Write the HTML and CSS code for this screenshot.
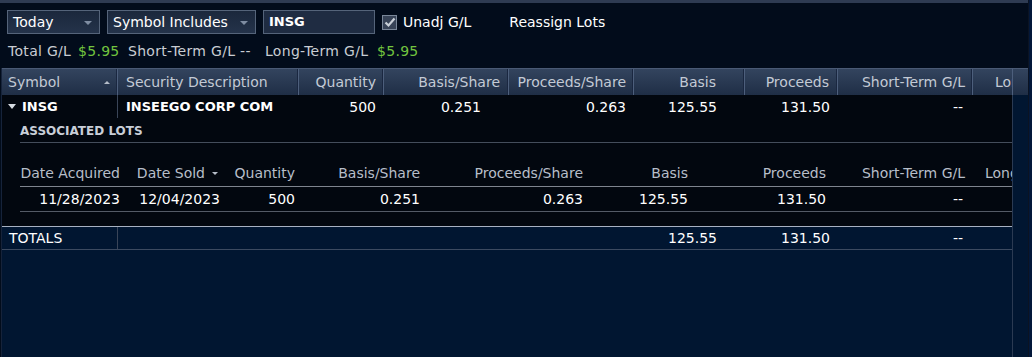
FILE: index.html
```html
<!DOCTYPE html>
<html lang="en">
<head>
    <meta charset="UTF-8">
    <title>Realized Gain/Loss</title>
    <link rel="stylesheet" href="styles.css">
</head>
<body>
    <div class="page">
        <div class="main">
            <div class="topbar"></div>

            <div class="toolbar">
                <div class="select select-today">Today<span class="caret"></span></div>
                <div class="select select-symbol">Symbol Includes<span class="caret"></span></div>
                <div class="text-input">INSG</div>
                <div class="check">
                    <span class="check-box">
                        <svg width="12" height="11" viewBox="0 0 12 11"><path d="M1.5 5.5 L4.5 8.5 L10.5 1.5" fill="none" stroke="#c9d0d8" stroke-width="2.2"/></svg>
                    </span>
                    Unadj G/L
                </div>
                <span class="link">Reassign Lots</span>
            </div>

            <div class="summary">
                <span class="sum-total">Total G/L</span>
                <span class="gain sum-gain">$5.95</span>
                <span class="sum-short">Short-Term G/L --</span>
                <span class="sum-long">Long-Term G/L</span>
                <span class="gain">$5.95</span>
            </div>

            <div class="grid-area">
                <div class="grid">
                    <div class="row head">
                        <div class="cell sym">Symbol<span class="sort-up"></span></div>
                        <div class="cell desc">Security Description</div>
                        <div class="cell num pr7">Quantity</div>
                        <div class="cell num pr8">Basis/Share</div>
                        <div class="cell num pr7">Proceeds/Share</div>
                        <div class="cell num pr28">Basis</div>
                        <div class="cell num pr8">Proceeds</div>
                        <div class="cell num pr7">Short-Term G/L</div>
                        <div class="cell last">Long-Term G/L</div>
                    </div>

                    <div class="body">
                        <div class="row group">
                            <div class="cell sym"><span class="expand"></span>INSG</div>
                            <div class="cell desc">INSEEGO CORP COM</div>
                            <div class="cell num pr8">500</div>
                            <div class="cell num pr28">0.251</div>
                            <div class="cell num pr8">0.263</div>
                            <div class="cell num pr28">125.55</div>
                            <div class="cell num pr8">131.50</div>
                            <div class="cell num pr10">--</div>
                            <div class="cell last"></div>
                        </div>

                        <div class="lots">
                            <div class="lots-title">ASSOCIATED LOTS</div>
                            <div class="lot-row lot-head">
                                <div class="lc">Date Acquired</div>
                                <div class="lc lc-sorted">Date Sold<span class="sort-down"></span></div>
                                <div class="lc">Quantity</div>
                                <div class="lc">Basis/Share</div>
                                <div class="lc">Proceeds/Share</div>
                                <div class="lc">Basis</div>
                                <div class="lc">Proceeds</div>
                                <div class="lc">Short-Term G/L</div>
                                <div class="lc lc-last">Long-Term G/L</div>
                            </div>
                            <div class="lot-row lot-data">
                                <div class="lc">11/28/2023</div>
                                <div class="lc">12/04/2023</div>
                                <div class="lc">500</div>
                                <div class="lc">0.251</div>
                                <div class="lc">0.263</div>
                                <div class="lc">125.55</div>
                                <div class="lc">131.50</div>
                                <div class="lc dash">--</div>
                                <div class="lc lc-last"></div>
                            </div>
                        </div>
                    </div>

                    <div class="row totals">
                        <div class="cell sym">TOTALS</div>
                        <div class="cell desc"></div>
                        <div class="cell"></div>
                        <div class="cell"></div>
                        <div class="cell"></div>
                        <div class="cell num pr28">125.55</div>
                        <div class="cell num pr8">131.50</div>
                        <div class="cell num pr10">--</div>
                        <div class="cell last"></div>
                    </div>

                    <div class="filler"></div>
                </div>
                <div class="vscroll">
                    <div class="corner"></div>
                </div>
            </div>
        </div>
        <div class="edge"></div>
    </div>
</body>
</html>
```

FILE: styles.css
```css
html, body {
    margin: 0;
    height: 100%;
}
body {
    font-family: "DejaVu Sans", Verdana, sans-serif;
    font-size: 14px;
    color: #ffffff;
    background-color: #020c1b;
    overflow: hidden;
}
.page {
    display: flex;
    height: 357px;
}
.main {
    width: 1028px;
    display: flex;
    flex-direction: column;
}
.edge {
    flex: 1;
    background: #03183a;
    border-left: 1px solid #0b1322;
}
.topbar {
    height: 3px;
    background: #2e3b52;
}

/* toolbar */
.toolbar {
    display: flex;
    align-items: center;
    height: 24px;
    margin-top: 7px;
    padding-left: 7px;
}
.select, .text-input {
    position: relative;
    box-sizing: border-box;
    height: 24px;
    line-height: 22px;
    padding-left: 5px;
    border: 1px solid #55647a;
    background: linear-gradient(#1b283c, #24334a);
    color: #ffffff;
    margin-right: 7px;
}
.select-today {
    width: 93px;
}
.select-symbol {
    width: 149px;
}
.text-input {
    width: 112px;
    background: #1f2c42;
    font-weight: bold;
    font-size: 13px;
}
.caret {
    position: absolute;
    right: 7px;
    top: 10px;
    border-left: 4px solid transparent;
    border-right: 4px solid transparent;
    border-top: 4px solid #7f8da2;
}
.check {
    display: flex;
    align-items: center;
    color: #ffffff;
}
.check-box {
    box-sizing: border-box;
    width: 15px;
    height: 15px;
    margin-right: 6px;
    border: 1px solid #7a8799;
    background: #374357;
    display: flex;
    align-items: center;
    justify-content: center;
}
.link {
    margin-left: 38px;
    color: #ffffff;
}

/* summary line */
.summary {
    display: flex;
    margin-top: 9px;
    padding-left: 8px;
    line-height: 16px;
    color: #c9cdd3;
    letter-spacing: 0.3px;
    white-space: nowrap;
}
.sum-total {
    width: 70px;
}
.sum-gain {
    width: 50px;
}
.sum-short {
    width: 137px;
}
.sum-long {
    width: 112px;
}
.gain {
    color: #72c43f;
}

/* grid */
.grid-area {
    flex: 1;
    display: flex;
    margin-top: 9px;
    margin-left: 1px;
}
.grid {
    width: 1010px;
    display: flex;
    flex-direction: column;
    border-left: 1px solid #16233a;
}
.row {
    display: grid;
    grid-template-columns: 116px 181px 85px 125px 125px 111px 93px 135px 39px;
}
.cell {
    overflow: hidden;
    white-space: nowrap;
    display: flex;
    align-items: center;
}
.num {
    justify-content: flex-end;
}
.pr7 { padding-right: 7px; }
.pr8 { padding-right: 8px; }
.pr10 { padding-right: 10px; }
.pr28 { padding-right: 28px; }

.head {
    height: 27px;
    box-sizing: border-box;
    border-top: 1px solid #4a5a75;
    background: linear-gradient(#33445e, #1f2e46);
    color: #c3cad5;
}
.head .cell {
    border-right: 1px solid #4d5f7c;
    box-shadow: inset -1px 0 0 #1a2740;
}
.head .cell.last {
    border-right: 0;
    box-shadow: none;
    padding-left: 22px;
}
.sym {
    padding-left: 6px;
    position: relative;
}
.desc {
    padding-left: 8px;
}
.sort-up {
    position: absolute;
    right: 7px;
    top: 12px;
    border-left: 3px solid transparent;
    border-right: 3px solid transparent;
    border-bottom: 3px solid #b5bdc9;
}

.body {
    background: #02070f;
}
.group {
    height: 23px;
}
.group .sym, .group .desc {
    font-weight: bold;
    font-size: 13px;
}
.group .sym, .totals .sym {
    border-right: 1px solid #3a4558;
}
.expand {
    display: inline-block;
    margin-right: 6px;
    border-left: 4px solid transparent;
    border-right: 4px solid transparent;
    border-top: 5px solid #d6dbe2;
}

/* associated lots */
.lots {
    padding: 0 0 14px 18px;
}
.lots-title {
    height: 24px;
    line-height: 26px;
    font-size: 12px;
    font-weight: bold;
    color: #c8ced8;
    border-bottom: 1px solid #444d5b;
}
.lot-row {
    display: grid;
    grid-template-columns: 102px 100px 75px 125px 163px 105px 138px 139px 45px;
    white-space: nowrap;
}
.lot-head {
    margin-top: 16px;
    height: 27px;
    align-items: center;
    color: #b7bec9;
    border-bottom: 1px solid #7e848e;
}
.lot-data {
    height: 24px;
    align-items: center;
    border-bottom: 1px solid #535a66;
}
.lc {
    text-align: right;
    padding-right: 2px;
    overflow: hidden;
}
.lc-last {
    text-align: left;
    padding-left: 18px;
    padding-right: 0;
}
.lot-head .lc-sorted {
    padding-right: 0;
}
.lot-data .dash {
    padding-right: 4px;
}
.sort-down {
    display: inline-block;
    vertical-align: middle;
    margin-left: 7px;
    margin-right: 4px;
    border-left: 3px solid transparent;
    border-right: 3px solid transparent;
    border-top: 3px solid #b5bdc9;
}

/* totals */
.totals {
    height: 22px;
    box-sizing: content-box;
    background: #011631;
    border-top: 1px solid #a7b1c1;
    border-bottom: 1px solid #3c4a60;
}
.totals .sym {
    padding-left: 7px;
}
.filler {
    flex: 1;
    background: #011631;
}
.vscroll {
    width: 16px;
    display: flex;
    flex-direction: column;
    background: #011631;
}
.corner {
    height: 27px;
    box-sizing: border-box;
    border-top: 1px solid #4a5a75;
    border-left: 1px solid #4d5f7c;
    background: linear-gradient(#33445e, #1f2e46);
}
.vscroll::after {
    content: "";
    flex: 1;
    border-left: 1px solid #2b3a52;
}
```
